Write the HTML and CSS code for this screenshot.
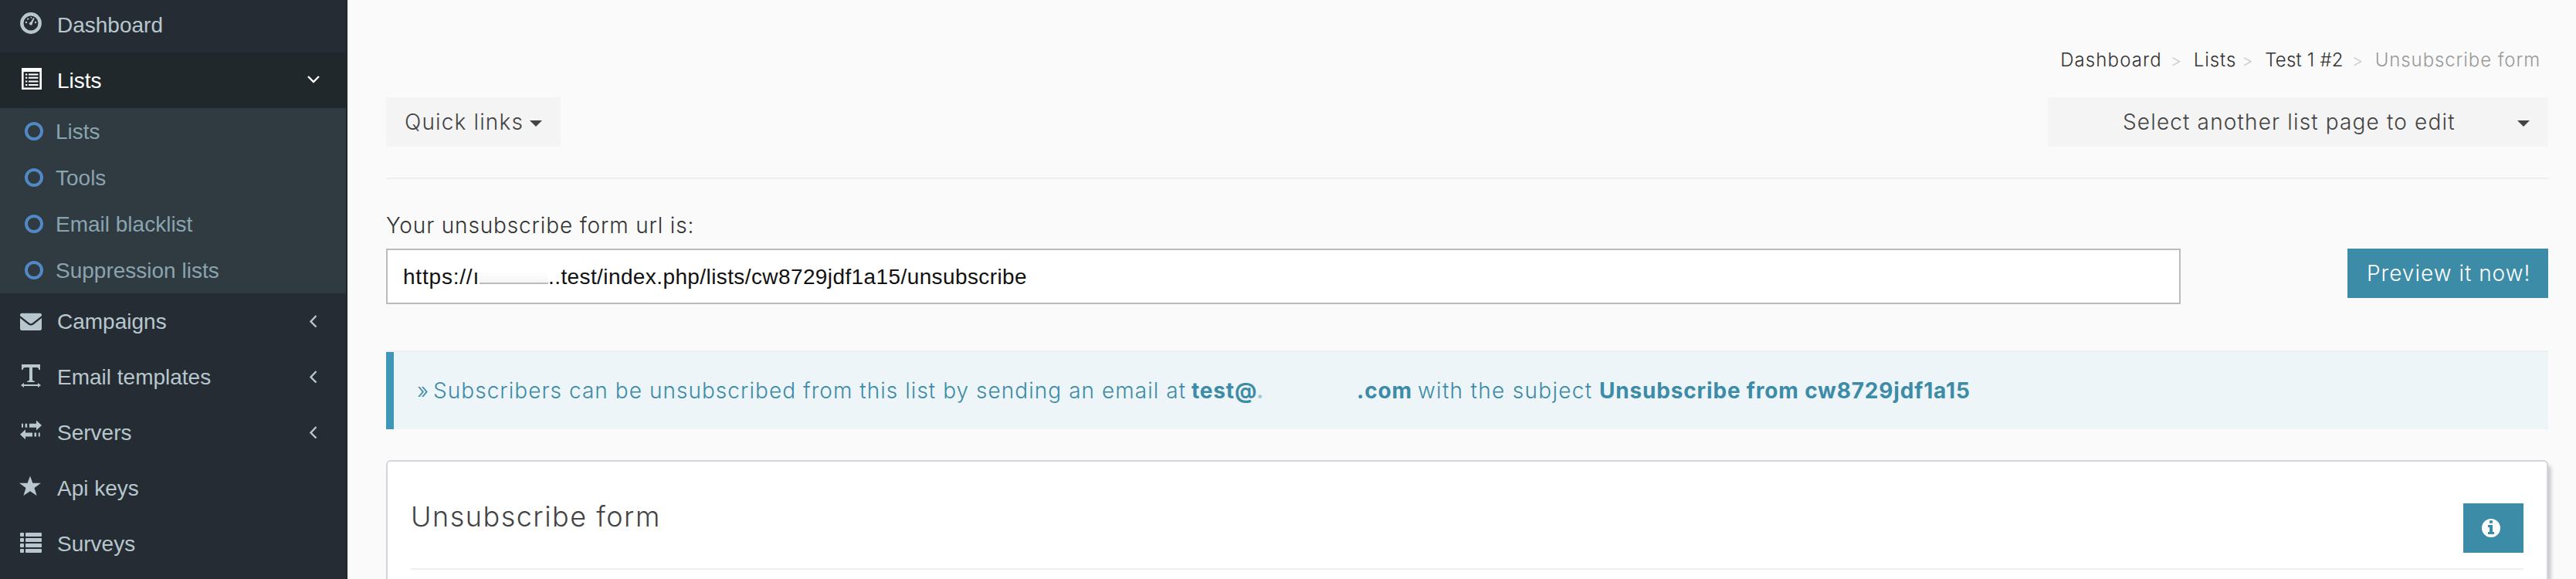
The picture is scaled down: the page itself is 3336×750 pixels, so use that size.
FILE: index.html
```html
<!DOCTYPE html>
<html lang="en">
<head>
    <meta charset="UTF-8">
    <meta name="viewport" content="width=device-width, initial-scale=1.0">
    <title>Unsubscribe form</title>
    <link rel="stylesheet" href="styles.css">
</head>
<body>
    <aside class="sidebar">
        <ul class="sidebar-menu">
            <li class="menu-item first">
                <svg class="icon" viewBox="0 0 28 28">
                    <circle cx="14" cy="14" r="11.7" fill="none" stroke="currentColor" stroke-width="4.4"/>
                    <circle cx="8" cy="13" r="1.2"/>
                    <circle cx="10.2" cy="8.6" r="1.2"/>
                    <circle cx="14.4" cy="6.9" r="0.9"/>
                    <circle cx="20" cy="13" r="1.2"/>
                    <circle cx="14" cy="14.6" r="2.1"/>
                    <path d="M13 14L17.2 7l1.5.7L15.5 15z"/>
                </svg>
                <span>Dashboard</span>
            </li>
            <li class="menu-item active">
                <svg class="icon" viewBox="0 0 28 28">
                    <path fill-rule="evenodd" d="M2 0h26v28H2zM4.6 5v20.4h20.8V5z"/>
                    <path d="M7 7.5h2.3v2H7zM11 7.5h12.4v2H11zM7 11.8h2.3v2H7zM11 11.8h12.4v2H11zM7 16.4h2.3v2H7zM11 16.4h12.4v2H11zM7 21h2.3v2H7zM11 21h12.4v2H11z"/>
                </svg>
                <span>Lists</span>
                <svg class="arrow" viewBox="0 0 16 16"><path d="M1 3l7 7 7-7"/></svg>
            </li>
            <li>
                <ul class="submenu">
                    <li><i class="circle"></i><span>Lists</span></li>
                    <li><i class="circle"></i><span>Tools</span></li>
                    <li><i class="circle"></i><span>Email blacklist</span></li>
                    <li><i class="circle"></i><span>Suppression lists</span></li>
                </ul>
            </li>
            <li class="menu-item">
                <svg class="icon" viewBox="0 0 28 28">
                    <path d="M0 9V8q0-2.2 2.2-2.2h23.6q2.2 0 2.2 2.2v1L16 18.6q-2 1.5-4 0z"/>
                    <path d="M0 12l10.8 8.4q3.2 2.2 6.4 0L28 12v13.8q0 2.2-2.2 2.2H2.2Q0 28 0 25.8z"/>
                </svg>
                <span>Campaigns</span>
                <svg class="arrow" viewBox="0 0 16 16"><path d="M11.5 1L4.5 8.5l7 7"/></svg>
            </li>
            <li class="menu-item">
                <svg class="icon" viewBox="0 0 28 28">
                    <path d="M2 0h24v7h-1.6q-.4-3-3-3H16v16q0 1.4 2.8 1.8V23H9.2v-1.2Q12 21.4 12 20V4H6.6q-2.6 0-3 3H2z"/>
                    <path d="M1 27l4-3v2h18v-2l4 3-4 3v-2H5v2z"/>
                </svg>
                <span>Email templates</span>
                <svg class="arrow" viewBox="0 0 16 16"><path d="M11.5 1L4.5 8.5l7 7"/></svg>
            </li>
            <li class="menu-item">
                <svg class="icon" viewBox="0 0 28 28">
                    <path d="M21 .5L28 7l-7 6.5V9.7h-9V4.8h9zM2 4.8h2v4.9H2zM6.6 4.8h2.6v4.9H6.6z"/>
                    <path d="M7 12.2L0 18.8l7 6.4v-3.8h9v-5H7zM18.5 16.4h2.6v5h-2.6zM23.8 16.4h2v5h-2z"/>
                </svg>
                <span>Servers</span>
                <svg class="arrow" viewBox="0 0 16 16"><path d="M11.5 1L4.5 8.5l7 7"/></svg>
            </li>
            <li class="menu-item">
                <svg class="icon" viewBox="0 0 28 28">
                    <path d="M13 .5l3.4 9.2H27l-8.5 6.4 3.1 10L13 20.2l-8.6 5.9 3.1-10L-1 9.7H9.6z"/>
                </svg>
                <span>Api keys</span>
            </li>
            <li class="menu-item">
                <svg class="icon" viewBox="0 0 28 28">
                    <rect x="0" y="2" width="5" height="5" rx="1"/><rect x="7" y="2" width="21" height="5" rx="1"/>
                    <rect x="0" y="9" width="5" height="5" rx="1"/><rect x="7" y="9" width="21" height="5" rx="1"/>
                    <rect x="0" y="16" width="5" height="5" rx="1"/><rect x="7" y="16" width="21" height="5" rx="1"/>
                    <rect x="0" y="23" width="5" height="5" rx="1"/><rect x="7" y="23" width="21" height="5" rx="1"/>
                </svg>
                <span>Surveys</span>
            </li>
        </ul>
    </aside>

    <main class="content">
        <ol class="breadcrumb">
            <li class="crumb-home">Dashboard</li>
            <li class="crumb-lists">Lists</li>
            <li class="crumb-list">Test 1 #2</li>
            <li class="current">Unsubscribe form</li>
        </ol>

        <div class="toolbar">
            <button class="btn quick-links">Quick links<i class="caret"></i></button>
            <button class="btn select-page">Select another list page to edit<i class="caret"></i></button>
        </div>
        <hr>

        <label class="url-label">Your unsubscribe form url is:</label>
        <div class="url-row">
            <div class="url-input"><span class="scheme">https://ı</span><i class="hidden-host"></i><span>..test/index.php/lists/cw8729jdf1a15/unsubscribe</span></div>
            <button class="btn btn-primary">Preview it now!</button>
        </div>
        <hr class="alert-line">

        <div class="alert">
            <span class="raquo">»</span>
            <span class="alert-text">Subscribers can be unsubscribed from this list by sending an email at</span>
            <b class="alert-user">test@<span class="faded">.</span></b>
            <b class="alert-domain">.com</b>
            <span class="alert-with">with the subject</span>
            <b class="alert-subject">Unsubscribe from cw8729jdf1a15</b>
        </div>

        <section class="box">
            <div class="box-header">
                <h3>Unsubscribe form</h3>
                <button class="btn btn-primary btn-info">
                    <svg viewBox="0 0 24 24">
                        <path fill-rule="evenodd" d="M12 0a12 12 0 1 0 0 24 12 12 0 1 0 0-24zM10 2.2h4v3.6h-4zM8 8h6v9h2v3H8v-3h2v-6H8z"/>
                    </svg>
                </button>
            </div>
        </section>
    </main>
</body>
</html>
```
FILE: styles.css
```css
* {
    box-sizing: border-box;
}

body {
    margin: 0;
    height: 750px;
    display: flex;
    overflow: hidden;
    background-color: #fafafa;
    color: #333;
    font-family: Inter, "Open Sans", sans-serif;
    font-size: 28px;
    font-weight: 300;
}

ul,
ol {
    list-style: none;
    margin: 0;
    padding: 0;
}

/* Sidebar */
.sidebar {
    width: 450px;
    flex: none;
    background-color: #252c33;
    border-right: 2px solid #20282c;
    font-family: "Liberation Sans", Arial, sans-serif;
    font-weight: 400;
}

.menu-item {
    display: flex;
    align-items: center;
    height: 72px;
    padding: 0 32px 0 26px;
    color: #b8c7ce;
}

.menu-item.first {
    height: 68px;
    padding-bottom: 4px;
}

.menu-item.active {
    color: #fff;
    background-color: #21282b;
}

.sidebar-menu span {
    padding-top: 2px;
}

.icon {
    width: 28px;
    height: 28px;
    margin: 0 20px 4px 0;
    overflow: visible;
    fill: currentColor;
}

.arrow {
    width: 16px;
    height: 16px;
    margin-left: auto;
    margin-right: 2px;
    fill: none;
    stroke: currentColor;
    stroke-width: 2.4;
}

.submenu {
    background-color: #303a41;
    color: #8aa4af;
}

.submenu li {
    display: flex;
    align-items: center;
    height: 60px;
    padding-left: 32px;
}

.circle {
    width: 24px;
    height: 24px;
    margin-right: 16px;
    border: 4px solid #5089c6;
    border-radius: 50%;
}

/* Content */
.content {
    display: flex;
    flex-direction: column;
    flex: 1;
    padding: 61px 36px 0 50px;
}

.breadcrumb {
    display: flex;
    justify-content: flex-end;
    height: 34px;
    padding-right: 10px;
    line-height: 34px;
    font-size: 24px;
    letter-spacing: 0.9px;
}

.breadcrumb li + li::before {
    content: ">";
    display: inline-block;
    width: 30px;
    margin-left: 11px;
    color: #ccc;
    font-size: 22px;
}

.crumb-home {
    letter-spacing: 1.1px;
}

.crumb-lists {
    margin-right: -4px;
}

.crumb-list {
    letter-spacing: 0.2px;
}

.breadcrumb .current {
    color: #999;
}

.toolbar {
    display: flex;
    justify-content: space-between;
    margin-top: 31px;
}

.btn {
    display: flex;
    align-items: center;
    height: 64px;
    padding: 0 24px;
    border: none;
    background-color: #f4f4f4;
    color: #444;
    font: inherit;
    letter-spacing: 1.15px;
    white-space: nowrap;
}

.quick-links {
    width: 226px;
}

.select-page {
    width: 648px;
    padding-left: 97px;
}

.caret {
    margin-left: auto;
    margin-top: 4px;
    border-top: 8px solid #444;
    border-left: 8px solid transparent;
    border-right: 8px solid transparent;
}

hr {
    flex: none;
    width: 100%;
    height: 2px;
    margin: 40px 0 0;
    border: none;
    background-color: #eee;
}

.url-label {
    margin: 40px 0 10px;
    line-height: 40px;
    letter-spacing: 0.85px;
}

.url-row {
    display: flex;
    justify-content: space-between;
    align-items: flex-start;
}

.url-input {
    display: flex;
    align-items: center;
    width: 2324px;
    height: 72px;
    padding: 1px 0 0 20px;
    border: 2px solid #bbb;
    background-color: #fff;
    color: #111;
    font-family: "Liberation Sans", Arial, sans-serif;
    font-weight: 400;
    letter-spacing: 0.4px;
}

.scheme {
    letter-spacing: 0.8px;
}

/* blanked out host name */
.hidden-host {
    width: 89px;
    height: 18px;
    border-bottom: 2px solid #bbb;
    background: linear-gradient(#fff, #f6f6f6);
}

.btn-primary {
    width: 260px;
    padding-left: 25px;
    background-color: #3c8ba7;
    color: #fff;
    letter-spacing: 1px;
}

.alert-line {
    margin-top: 60px;
}

.alert {
    display: flex;
    align-items: center;
    height: 100px;
    padding-left: 30px;
    border-left: 10px solid #3f97b8;
    background-color: #edf5f8;
    color: #3c8ba7;
    letter-spacing: 1.04px;
    white-space: nowrap;
}

.alert b {
    font-weight: 700;
    letter-spacing: 0.82px;
}

.raquo {
    width: 21px;
}

.alert-text {
    width: 982px;
}

.alert-user {
    width: 214px;
}

.faded {
    opacity: 0.4;
}

.alert-domain {
    width: 79px;
}

.alert .alert-with {
    width: 235px;
    letter-spacing: 1.3px;
}

.box {
    flex: 1;
    margin-top: 40px;
    padding: 0 30px;
    border: 2px solid #d2d6dc;
    border-bottom: none;
    border-radius: 6px 6px 0 0;
    background-color: #fff;
    box-shadow: 4px 6px 4px rgba(0, 0, 0, 0.18);
}

.box-header {
    display: flex;
    justify-content: space-between;
    padding: 54px 0 20px;
    border-bottom: 2px solid #eee;
}

.box-header h3 {
    margin: 0;
    color: #444;
    font-size: 36px;
    font-weight: 300;
    line-height: 34px;
    letter-spacing: 1.5px;
}

.btn-info {
    width: 78px;
    padding: 0 24px;
}

.btn-info svg {
    width: 24px;
    height: 24px;
    flex: none;
    fill: #fff;
}
```
